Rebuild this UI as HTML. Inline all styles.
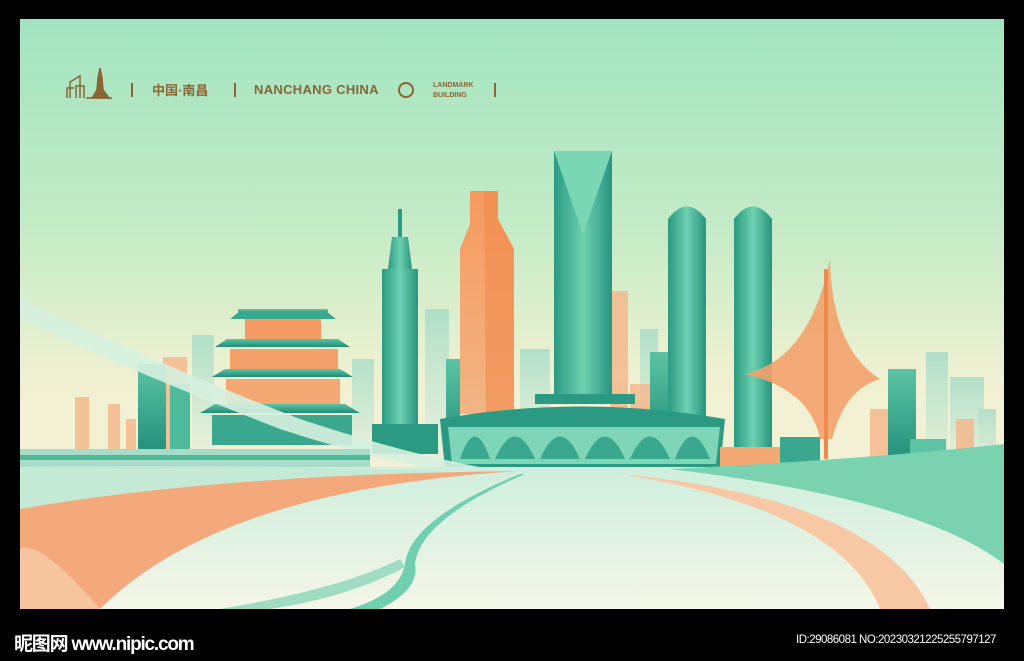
<!DOCTYPE html>
<html><head><meta charset="utf-8"><style>
html,body{margin:0;padding:0;background:#000;width:1024px;height:661px;overflow:hidden}
#art{position:absolute;left:20px;top:19px;width:984px;height:590px}
.hd{position:absolute;color:#8a6535;font-family:"Liberation Sans","Noto Sans CJK SC",sans-serif;font-weight:bold}
.ft{position:absolute;color:#fff;font-family:"Liberation Sans","Noto Sans CJK SC",sans-serif}
</style></head><body>
<svg id="art" viewBox="0 0 984 590" xmlns="http://www.w3.org/2000/svg">
<defs>
<linearGradient id="sky" x1="0" y1="0" x2="0" y2="1">
<stop offset="0" stop-color="#a2e4c0"/><stop offset="0.35" stop-color="#c4ebc6"/><stop offset="0.62" stop-color="#f1f1d2"/><stop offset="1" stop-color="#f5f2dc"/></linearGradient>
<linearGradient id="tl" x1="0" y1="0" x2="0" y2="1"><stop offset="0" stop-color="#5cc4a4"/><stop offset="1" stop-color="#1f8c78"/></linearGradient>
<linearGradient id="tl2" x1="0" y1="0" x2="1" y2="0"><stop offset="0" stop-color="#2a9a82"/><stop offset="0.5" stop-color="#6dd0b0"/><stop offset="1" stop-color="#2a9480"/></linearGradient>
<linearGradient id="or" x1="0" y1="0" x2="0" y2="1"><stop offset="0" stop-color="#f59a5e"/><stop offset="1" stop-color="#f2b585"/></linearGradient>
<linearGradient id="pale" x1="0" y1="0" x2="0" y2="1"><stop offset="0" stop-color="#a5dcc8"/><stop offset="1" stop-color="#e8f1dc"/></linearGradient>
<linearGradient id="gr" x1="0" y1="0" x2="0" y2="1"><stop offset="0" stop-color="#cfeedd"/><stop offset="1" stop-color="#f4f6e8"/></linearGradient>
</defs>
<rect width="984" height="590" fill="url(#sky)"/>
<g fill="url(#pale)" opacity="0.8">
<rect x="172" y="316" width="22" height="120"/><rect x="332" y="340" width="22" height="100"/>
<rect x="405" y="290" width="24" height="150"/><rect x="500" y="330" width="30" height="100"/>
<rect x="620" y="310" width="18" height="120"/><rect x="906" y="333" width="22" height="120"/>
<rect x="930" y="358" width="34" height="90"/><rect x="958" y="390" width="18" height="60"/>
</g>
<g fill="#f4b88e" opacity="0.85">
<rect x="55" y="378" width="14" height="70"/><rect x="88" y="385" width="12" height="60"/>
<rect x="106" y="400" width="10" height="45"/><rect x="143" y="338" width="24" height="100"/>
<rect x="590" y="272" width="18" height="160"/><rect x="610" y="365" width="22" height="70"/>
<rect x="936" y="400" width="18" height="48"/><rect x="850" y="390" width="18" height="60"/>
</g>
<rect x="118" y="345" width="28" height="95" fill="url(#tl)"/>
<rect x="150" y="365" width="20" height="75" fill="#4dbb9b"/>
<rect x="426" y="340" width="14" height="100" fill="url(#tl)"/>
<rect x="630" y="333" width="18" height="100" fill="url(#tl)"/>
<rect x="868" y="350" width="28" height="100" fill="url(#tl)"/>
<rect x="890" y="420" width="36" height="30" fill="#5cc4a4"/>
<g fill="url(#tl)">
<rect x="218" y="290" width="90" height="10"/><path d="M210 300 L316 300 L306 292 L220 292Z" fill="#3aa88e"/>
<rect x="225" y="300" width="76" height="22" fill="#f49a62"/>
<path d="M195 328 L330 328 L318 320 L207 320Z"/>
<rect x="210" y="330" width="108" height="22" fill="#f4a06a"/>
<path d="M192 358 L333 358 L320 350 L205 350Z"/>
<rect x="206" y="360" width="114" height="25" fill="#f4a874"/>
<path d="M180 394 L340 394 L325 385 L195 385Z"/>
<rect x="192" y="396" width="140" height="30" fill="#3aa88e"/>
</g>
<rect x="378" y="190" width="4" height="30" fill="#2a9a82"/>
<path d="M372 218 L388 218 L392 250 L368 250Z" fill="url(#tl2)"/>
<rect x="362" y="250" width="36" height="160" fill="url(#tl2)"/>
<rect x="352" y="405" width="66" height="30" fill="#2a9a82"/>
<path d="M450 172 L478 172 L478 200 L494 230 L494 395 L440 395 L440 230 L450 205Z" fill="url(#or)"/>
<path d="M464 172 L478 172 L478 200 L494 230 L494 395 L466 395Z" fill="#f28a4c" opacity="0.6"/>
<rect x="534" y="132" width="58" height="250" fill="url(#tl2)"/>
<path d="M534 132 L592 132 L563 215Z" fill="#7ad7b6"/>
<rect x="515" y="375" width="100" height="10" fill="#2a9a82"/>
<path d="M648 200 Q667 175 686 200 L686 410 L648 410Z" fill="url(#tl2)"/>
<path d="M714 200 Q733 175 752 200 L752 430 L714 430Z" fill="url(#tl2)"/>
<path d="M420 400 Q560 375 705 400 L700 450 L425 450Z" fill="#2a9a82"/>
<path d="M428 408 L700 408 L696 445 L432 445Z" fill="#7fd5b8"/>
<g fill="#3aa88e"><path d="M440 440 Q455 395 470 440Z"/><path d="M475 440 Q495 395 515 440Z"/><path d="M520 440 Q540 395 560 440Z"/><path d="M565 440 Q585 395 605 440Z"/><path d="M610 440 Q630 395 650 440Z"/><path d="M655 440 Q672 395 690 440Z"/></g>
<path d="M725 355 Q790 340 810 240 Q812 330 860 360 Q825 370 812 420 L800 420 Q790 370 725 355Z" fill="#f4a26c" opacity="0.9"/>
<rect x="804" y="250" width="4" height="190" fill="#f08a4c"/>
<rect x="700" y="428" width="60" height="22" fill="#f4a874"/>
<rect x="760" y="418" width="40" height="30" fill="#3aa88e"/>
<path d="M0 280 Q150 350 280 400 Q400 440 500 455 L500 462 Q380 450 260 410 Q130 360 0 300Z" fill="#d6efdf" opacity="0.9"/>
<rect x="0" y="430" width="350" height="18" fill="#a8dcc8"/>
<rect x="0" y="436" width="350" height="5" fill="#4bb896"/>
<path d="M0 448 L984 448 L984 590 L0 590Z" fill="url(#gr)"/>
<path d="M0 448 Q200 445 430 452 Q200 470 0 490Z" fill="#c4ead6"/>
<path d="M0 490 Q200 455 500 452 Q200 470 80 590 L0 590Z" fill="#f4a97c"/>
<path d="M0 530 Q20 520 80 590 L0 590Z" fill="#f6c5a0"/>
<path d="M600 455 Q860 480 910 590 L860 590 Q820 490 600 455Z" fill="#f6c9a4"/>
<path d="M650 450 Q850 440 984 425 L984 545 Q900 480 650 450Z" fill="#7ad2b0"/>
<path d="M500 455 Q390 500 385 545 Q380 575 330 590 L360 590 Q400 570 395 545 Q400 500 505 455Z" fill="#6fcfae"/>
<path d="M200 590 Q320 570 380 540 L385 548 Q330 578 250 590Z" fill="#9fdcc2"/>
</svg>
<div class="hd" style="left:66px;top:68px;width:46px;height:32px">
<svg width="46" height="32" viewBox="0 0 46 32" fill="none" stroke="#8a6535" stroke-width="1.5"><path d="M1 30 L1 20 L8 20 M4 30 L4 14 L14 8 L14 30 M10 30 L10 18 L18 18 L18 30"/><path d="M26 30 L31 22 L32 10 L34 0 L36 10 L37 22 L43 30Z" fill="#8a6535"/><path d="M20 30 L46 30"/></svg></div>
<div class="hd" style="left:131px;top:83px;width:2px;height:14px;background:#8a6535"></div>
<div class="hd" style="left:152px;top:80px;font-size:13px">中国·南昌</div>
<div class="hd" style="left:234px;top:83px;width:2px;height:14px;background:#8a6535"></div>
<div class="hd" style="left:254px;top:82px;font-size:13px;letter-spacing:0.3px">NANCHANG CHINA</div>
<div class="hd" style="left:398px;top:82px;width:12px;height:12px;border:2.5px solid #8a6535;border-radius:50%"></div>
<div class="hd" style="left:433px;top:81px;font-size:7px;line-height:10px">LANDMARK<br>BUILDING</div>
<div class="hd" style="left:494px;top:83px;width:2px;height:14px;background:#8a6535"></div>
<div class="ft" style="left:14px;top:629px;font-size:19px;font-weight:bold;letter-spacing:-1.2px">昵图网 www.nipic.com</div>
<div class="ft" style="left:796px;top:634px;font-size:11.5px;letter-spacing:-0.5px">ID:29086081 NO:20230321225255797127</div>
</body></html>
